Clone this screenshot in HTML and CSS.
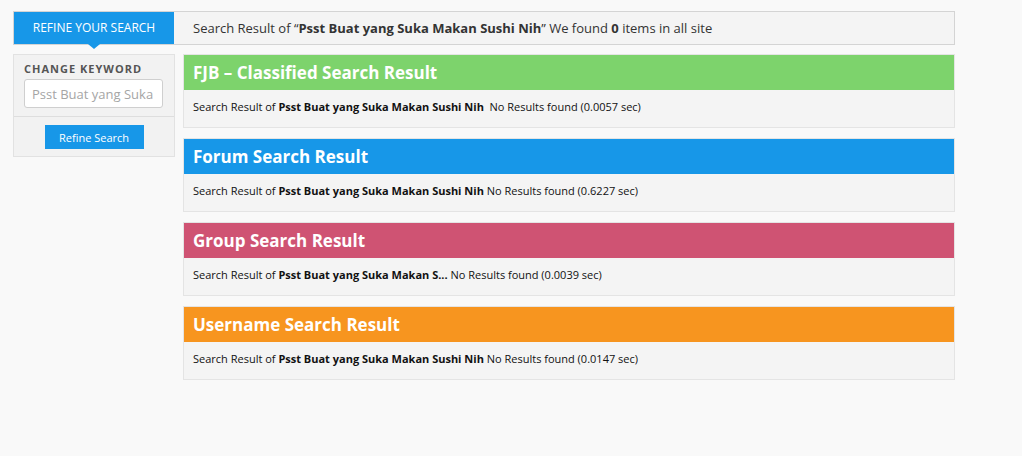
FILE: index.html
```html
<!DOCTYPE html>
<html>
<head>
<meta charset="utf-8">
<link rel="stylesheet" href="styles.css">
</head>
<body>
<div class="page">
  <div class="topbar">
    <div class="tab">REFINE YOUR SEARCH</div>
    <div class="summary">Search Result of “<b>Psst Buat yang Suka Makan Sushi Nih</b>” We found <b>0</b> items in all site</div>
  </div>
  <div class="content">
    <aside class="sidebar">
      <div class="kw">
        <div class="kw-label">CHANGE KEYWORD</div>
        <input class="kw-input" type="text" placeholder="Psst Buat yang Suka Makan Sushi Nih">
      </div>
      <div class="btn-row"><button class="btn">Refine Search</button></div>
    </aside>
    <main class="results">
      <section class="panel">
        <h2 class="panel-head green">FJB – Classified Search Result</h2>
        <div class="panel-body">Search Result of <b>Psst Buat yang Suka Makan Sushi Nih</b>&nbsp; No Results found (0.0057 sec)</div>
      </section>
      <section class="panel">
        <h2 class="panel-head blue">Forum Search Result</h2>
        <div class="panel-body">Search Result of <b>Psst Buat yang Suka Makan Sushi Nih</b> No Results found (0.6227 sec)</div>
      </section>
      <section class="panel">
        <h2 class="panel-head pink">Group Search Result</h2>
        <div class="panel-body">Search Result of <b>Psst Buat yang Suka Makan S...</b> No Results found (0.0039 sec)</div>
      </section>
      <section class="panel">
        <h2 class="panel-head orange">Username Search Result</h2>
        <div class="panel-body">Search Result of <b>Psst Buat yang Suka Makan Sushi Nih</b> No Results found (0.0147 sec)</div>
      </section>
    </main>
  </div>
</div>
</body>
</html>
```
FILE: styles.css
```css
* { box-sizing: border-box; }
html, body { margin: 0; padding: 0; }
body {
  background: #f9f9f9;
  font-family: "Open Sans", "Liberation Sans", sans-serif;
  color: #333;
}
.page {
  width: 942px;
  margin-left: 13px;
  padding-top: 11px;
}
.topbar {
  display: flex;
  height: 34px;
  border: 1px solid #d4d4d4;
  background: #f4f4f4;
}
.tab {
  position: relative;
  width: 160px;
  background: #1797e8;
  color: #fff;
  font-size: 12px;
  line-height: 32px;
  text-align: center;
}
.tab::after {
  content: "";
  position: absolute;
  left: 74px;
  bottom: -5px;
  border-left: 6px solid transparent;
  border-right: 6px solid transparent;
  border-top: 5px solid #1797e8;
}
.summary {
  padding-left: 19px;
  font-size: 13px;
  line-height: 32px;
  color: #333;
}
.summary b { font-weight: 700; }
.content {
  display: flex;
  gap: 8px;
  margin-top: 9px;
  align-items: flex-start;
}
.sidebar {
  width: 162px;
  background: #f2f2f2;
  border: 1px solid #e2e2e2;
}
.kw {
  padding: 7px 10px 8px 10px;
  border-bottom: 1px solid #dedede;
}
.kw-label {
  font-size: 11px;
  font-weight: 700;
  letter-spacing: 1px;
  color: #555;
  line-height: 14px;
}
.kw-input {
  display: block;
  width: 139px;
  height: 29px;
  margin-top: 3px;
  border: 1px solid #cfcfcf;
  border-radius: 3px;
  background: #fff;
  padding: 0 7px;
  font-family: "Open Sans", "Liberation Sans", sans-serif;
  font-size: 13px;
  color: #999;
}
.kw-input::placeholder { color: #a5a5a5; }
.btn-row {
  padding: 8px 0 7px;
  text-align: center;
}
.btn {
  display: inline-block;
  vertical-align: top;
  width: 99px;
  height: 24px;
  border: 0;
  background: #1797e8;
  color: #fff;
  font-family: "Open Sans", "Liberation Sans", sans-serif;
  font-size: 11px;
  padding: 0;
}
.results {
  flex: 1;
  display: flex;
  flex-direction: column;
  gap: 10px;
}
.panel {
  border: 1px solid #e4e4e4;
  background: #f4f4f4;
}
.panel-head {
  margin: 0;
  height: 35px;
  padding-left: 9px;
  font-size: 17px;
  font-weight: 700;
  line-height: 36px;
  color: #fff;
}
.green { background: #7dd36c; }
.blue { background: #1797e8; }
.pink { background: #cf5373; }
.orange { background: #f7951f; }
.panel-body {
  height: 37px;
  padding-left: 9px;
  font-size: 11px;
  line-height: 34px;
  color: #111;
}
.panel-body b { font-weight: 700; }
```
